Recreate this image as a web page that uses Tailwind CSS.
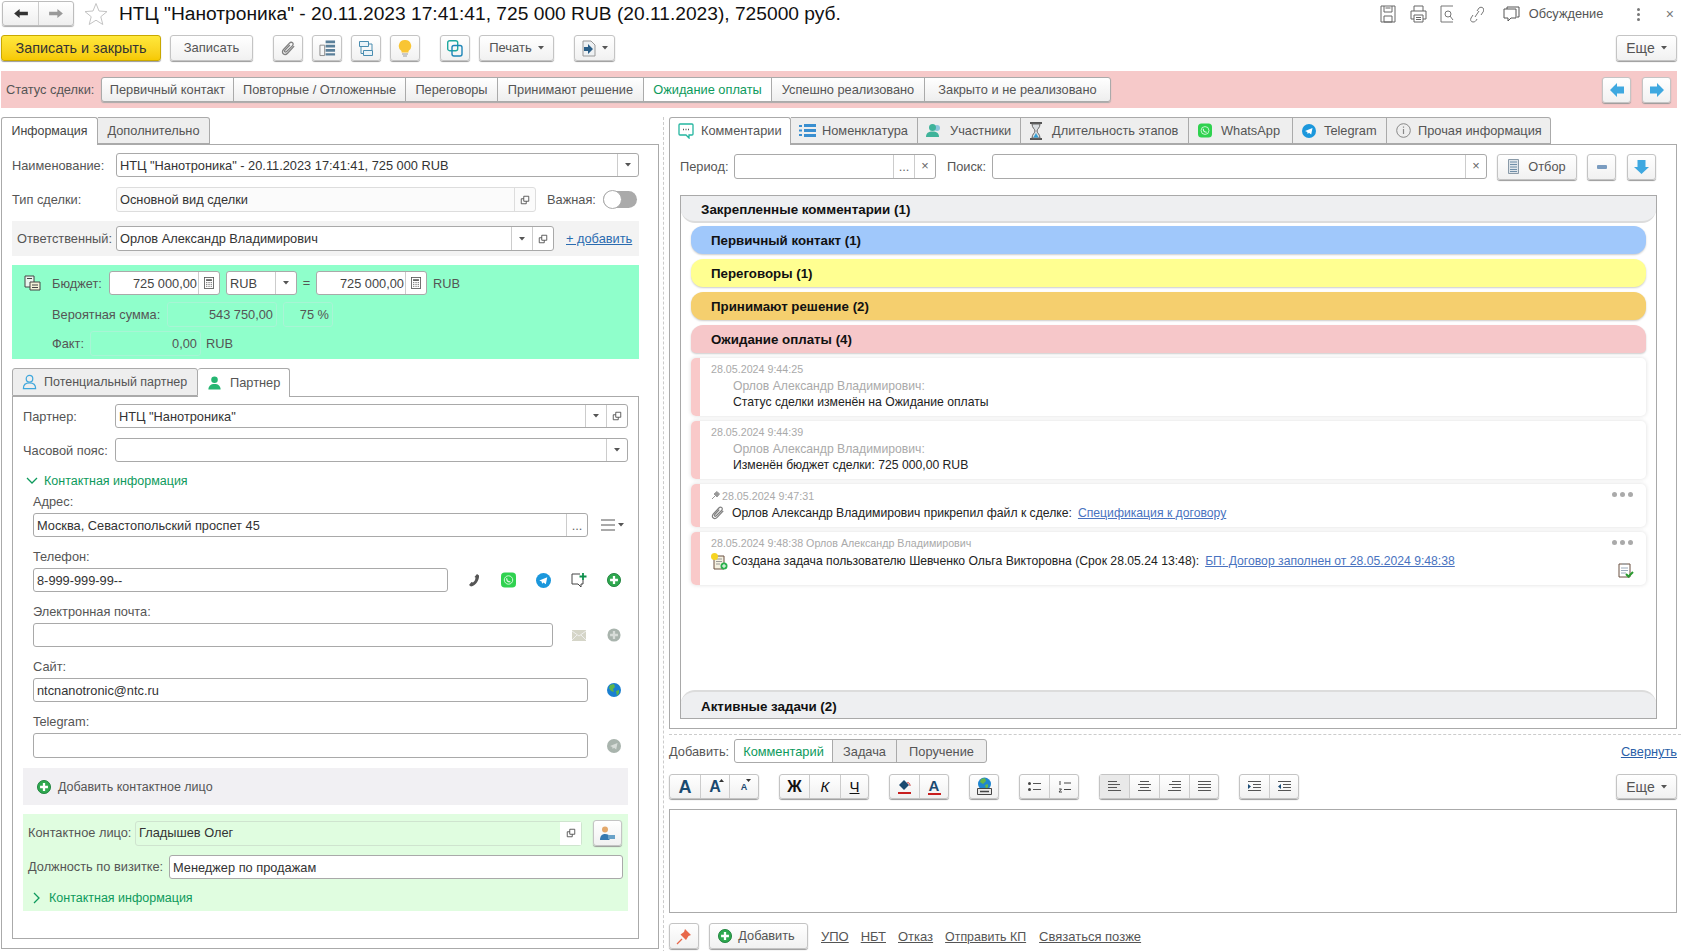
<!DOCTYPE html>
<html lang="ru">
<head>
<meta charset="UTF-8">
<title>НТЦ Нанотроника</title>
<script src="https://cdn.jsdelivr.net/npm/@tailwindcss/browser@4"></script>
</head>
<body class="w-[1681px] h-[951px] overflow-hidden bg-white text-[12.8px] leading-[14px] text-[#444] font-['Liberation_Sans',Arial,sans-serif]">

<svg class="hidden">
  <symbol id="copy" viewBox="0 0 12 12"><path d="M4.500 1.500h6v6h-6z M4.500 4.500h-3v6h6v-3" fill="none" stroke="#444" stroke-width="1"/></symbol>
  <symbol id="dd" viewBox="0 0 6 4"><path d="M0 0h6L3 3.500z" fill="#555"/></symbol>
  <symbol id="plus" viewBox="0 0 16 16"><circle cx="8" cy="8" r="7.500" fill="#2fa84f"/><circle cx="8" cy="8" r="7.500" fill="none" stroke="#1c7f3a" stroke-width="1"/><path d="M8 3.500v9M3.500 8h9" stroke="#fff" stroke-width="2.600"/></symbol>
  <symbol id="plusgray" viewBox="0 0 16 16"><circle cx="8" cy="8" r="7.500" fill="#a9b4ad"/><path d="M8 3.500v9M3.500 8h9" stroke="#d7dcd8" stroke-width="2.600"/></symbol>
  <symbol id="calc" viewBox="0 0 12 14"><rect x=".5" y=".5" width="11" height="13" fill="none" stroke="#555"/><path d="M2.500 2.500h7v2h-7z" fill="#555"/><path d="M2.500 6.500h1.500M5.300 6.500h1.500M8 6.500h1.500M2.500 8.700h1.500M5.300 8.700h1.500M8 8.700h1.500M2.500 11h1.500M5.300 11h1.500M8 11h1.500" stroke="#555"/></symbol>
  <symbol id="wa" viewBox="0 0 16 16"><rect width="16" height="16" rx="4" fill="#2fd24f"/><circle cx="8" cy="8" r="4.500" fill="none" stroke="#d8f8de" stroke-width="1"/><path d="M6 6c0 2.500 1.500 4 4 4" fill="none" stroke="#d8f8de" stroke-width="1.300"/></symbol>
  <symbol id="tg" viewBox="0 0 16 16"><circle cx="8" cy="8" r="8" fill="#1b97dc"/><path d="M3.500 8l8.500-3.500-1.500 7.500-2.500-2-1.500 1.500-.5-2.500z" fill="#fff"/></symbol>
  <symbol id="person" viewBox="0 0 16 16"><circle cx="8" cy="4.500" r="3.500"/><path d="M1.500 15c0-4 2.500-6 6.500-6s6.500 2 6.500 6z"/></symbol>
  <symbol id="hourglass" viewBox="0 0 14 18"><path d="M1 1h12M1 17h12" stroke="#555" stroke-width="2"/><path d="M3 2c0 4 3 5 3 7s-3 3-3 7h8c0-4-3-5-3-7s3-3 3-7z" fill="#d9dde0" stroke="#666"/><path d="M4.500 15.500c.5-2 2.500-3 2.500-5 0 2 2 3 2.500 5z" fill="#2f9fd8"/></symbol>
  <symbol id="clip" viewBox="0 0 16 16"><path d="M14 5.500l-7 7.500c-1.400 1.500-3.400 1.600-4.600.5s-1.100-3 .3-4.500l6.300-6.700c1-1.100 2.400-1.200 3.300-.4s.8 2.300-.2 3.300L6 11.200c-.6.600-1.400.7-1.900.3s-.4-1.200.2-1.800l5.200-5.500" fill="none" stroke="#808080" stroke-width="1.400"/></symbol>
</svg>

<!-- заголовок -->
<div class="h-[35px] flex items-start pt-[1px]">
  <div class="ml-[2px] w-[72px] h-[25px] flex border border-[#bdbdbd] rounded-[3px] bg-linear-to-b from-white to-[#efefef] shadow-[0_1px_1px_#aaa]">
    <div class="w-[36px] flex items-center justify-center border-r border-[#ccc]"><svg width="14" height="11" viewBox="0 0 15 12"><path d="M0 6l6-5v3h9v4H6v3z" fill="#333"/></svg></div>
    <div class="flex-1 flex items-center justify-center"><svg width="14" height="11" viewBox="0 0 15 12"><path d="M15 6L9 1v3H0v4h9v3z" fill="#999"/></svg></div>
  </div>
  <svg class="ml-[10px] mt-[1px]" width="24" height="24" viewBox="0 0 24 24"><path d="M12 1.500l3 7.500 8 .6-6.200 5.100 2 7.800L12 18.200 5.200 22.500l2-7.800L1 9.600 9 9z" fill="#fff" stroke="#c4c4c4"/></svg>
  <div class="ml-[11px] mt-[2px] text-[19.2px] leading-[22px] text-[#111] whitespace-nowrap">НТЦ "Нанотроника" - 20.11.2023 17:41:41, 725 000 RUB (20.11.2023), 725000 руб.</div>
  <div class="ml-auto flex items-center h-[26px] text-[#555]">
    <svg width="16" height="18" viewBox="0 0 16 18"><path d="M1 1h14v16H1z M4 1v6h8V1 M4 11h8v6H4z M5.500 3h5" fill="none" stroke="#666"/></svg>
    <svg class="ml-[14px]" width="17" height="18" viewBox="0 0 17 18"><path d="M4 6V1h9v5 M1 6h15v8h-3 M4 14H1V6 M4 10h9v7H4z M6 12.500h5M6 14.500h5" fill="none" stroke="#666"/></svg>
    <svg class="ml-[13px]" width="16" height="18" viewBox="0 0 16 18"><path d="M13 1H1v16h12" fill="none" stroke="#777"/><circle cx="8" cy="9" r="3" fill="none" stroke="#777"/><path d="M10 11l3 4" stroke="#777"/></svg>
    <svg class="ml-[13px]" width="15" height="17" viewBox="0 0 15 17"><path d="M6 11l4-6M4 9l-2 3c-1 2 0 4 2 4s3-1 4-3M8 5l2-3c1-1 3-1 4 0s1 3 0 4l-2 3" fill="none" stroke="#777"/></svg>
    <svg class="ml-[19px]" width="17" height="17" viewBox="0 0 17 17"><path d="M4 3V1h12v10h-2 M1 3h12v9H8l-3 3v-3H1z" fill="#fff" stroke="#555"/></svg>
    <span class="ml-[9px] w-[75px] whitespace-nowrap">Обсуждение</span>
    <span class="ml-[33px] w-[4px] flex flex-col gap-[2px]"><i class="block w-[3px] h-[3px] rounded-full bg-[#777]"></i><i class="block w-[3px] h-[3px] rounded-full bg-[#777]"></i><i class="block w-[3px] h-[3px] rounded-full bg-[#777]"></i></span>
    <span class="ml-[25px] mr-[7px] text-[14px] text-[#777]">×</span>
  </div>
</div>

<!-- панель команд -->
<div class="h-[36px] flex items-start">
  <button class="ml-[1px] w-[160px] h-[26px] border border-[#c9a800] rounded-[3px] bg-linear-to-b from-[#ffe83a] to-[#f6c900] shadow-[0_1px_1px_#999] text-[#333] text-[14.4px]">Записать и закрыть</button>
  <button class="ml-[9px] w-[83px] h-[26px] border border-[#c4c4c4] rounded-[3px] bg-linear-to-b from-white to-[#f1f1f1] shadow-[0_1px_1px_#999] text-[#555] text-[13px]">Записать</button>
  <button class="ml-[20px] w-[30px] h-[26px] flex items-center justify-center border border-[#c4c4c4] rounded-[3px] bg-linear-to-b from-white to-[#f1f1f1] shadow-[0_1px_1px_#999]"><svg width="15" height="15"><use href="#clip"/></svg></button>
  <button class="ml-[9px] w-[30px] h-[26px] flex items-center justify-center border border-[#c4c4c4] rounded-[3px] bg-linear-to-b from-white to-[#f1f1f1] shadow-[0_1px_1px_#999]"><svg width="17" height="18" viewBox="0 0 18 18"><path d="M1 6h5v11H1z" fill="none" stroke="#888"/><path d="M7 1h10v3H7zM7 5.500h10v3H7zM7 10h10v3H7zM7 14.500h10v2.500H7z" fill="#5a7f99"/></svg></button>
  <button class="ml-[9px] w-[30px] h-[26px] flex items-center justify-center border border-[#c4c4c4] rounded-[3px] bg-linear-to-b from-white to-[#f1f1f1] shadow-[0_1px_1px_#999]"><svg width="16" height="17" viewBox="0 0 16 17"><path d="M1.500 1.500h9v5h-9zM5.500 10.500h9v5h-9z" fill="#eaf3f8" stroke="#4a8db0"/><path d="M3 7v6.500h2.500M10.500 4H14v6" fill="none" stroke="#4a8db0"/></svg></button>
  <button class="ml-[9px] w-[30px] h-[26px] flex items-center justify-center border border-[#c4c4c4] rounded-[3px] bg-linear-to-b from-white to-[#f1f1f1] shadow-[0_1px_1px_#999]"><svg width="14" height="19" viewBox="0 0 14 19"><path d="M7 1a6 6 0 0 1 3.500 11v1.500h-7V12A6 6 0 0 1 7 1z" fill="#f9c533"/><path d="M4 15h6M5 17h4" stroke="#bbb" stroke-width="1.500"/></svg></button>
  <button class="ml-[20px] w-[30px] h-[26px] flex items-center justify-center border border-[#c4c4c4] rounded-[3px] bg-linear-to-b from-white to-[#f1f1f1] shadow-[0_1px_1px_#999]"><svg width="16" height="17" viewBox="0 0 16 17"><rect x=".7" y=".7" width="10" height="10" rx="2" fill="none" stroke="#1fa9a0" stroke-width="1.400"/><rect x="5" y="5.500" width="10" height="10.500" rx="2" fill="none" stroke="#1f86b8" stroke-width="1.400"/></svg></button>
  <button class="ml-[9px] w-[75px] h-[26px] flex items-center justify-center gap-[6px] border border-[#c4c4c4] rounded-[3px] bg-linear-to-b from-white to-[#f1f1f1] shadow-[0_1px_1px_#999] text-[#555] text-[13px]">Печать<svg width="6" height="4"><use href="#dd"/></svg></button>
  <button class="ml-[20px] w-[41px] h-[26px] flex items-center justify-center gap-[6px] border border-[#c4c4c4] rounded-[3px] bg-linear-to-b from-white to-[#f1f1f1] shadow-[0_1px_1px_#999]"><svg width="14" height="17" viewBox="0 0 14 17"><path d="M1 1h8l4 4v11H1z" fill="#eef1f3" stroke="#999"/><path d="M2 7h4V4l5 5-5 5v-3H2z" fill="#2b5f88"/></svg><svg width="6" height="4"><use href="#dd"/></svg></button>
  <button class="ml-auto mr-[4px] w-[61px] h-[26px] flex items-center justify-center gap-[6px] border border-[#c4c4c4] rounded-[3px] bg-linear-to-b from-white to-[#f1f1f1] shadow-[0_1px_1px_#999] text-[#555] text-[14px]">Еще<svg width="6" height="4"><use href="#dd"/></svg></button>
</div>

<!-- статус сделки -->
<div class="ml-[1px] w-[1676px] h-[37px] bg-[#f6c9c9] flex items-center">
  <span class="ml-[5px] w-[95px] text-[#555] whitespace-nowrap">Статус сделки:</span>
  <div class="flex h-[25px] border border-[#aaa] rounded-[3px] bg-linear-to-b from-white to-[#eeeeee] shadow-[0_1px_1px_#aaa] text-[#555]">
    <span class="w-[132px] flex items-center justify-center border-r border-[#aaa]">Первичный контакт</span>
    <span class="w-[172px] flex items-center justify-center border-r border-[#aaa]">Повторные / Отложенные</span>
    <span class="w-[92px] flex items-center justify-center border-r border-[#aaa]">Переговоры</span>
    <span class="w-[146px] flex items-center justify-center border-r border-[#aaa]">Принимают решение</span>
    <span class="w-[128px] flex items-center justify-center border-r border-[#aaa] bg-white text-[#0d9a5c]">Ожидание оплаты</span>
    <span class="w-[153px] flex items-center justify-center border-r border-[#aaa]">Успешно реализовано</span>
    <span class="w-[185px] flex items-center justify-center">Закрыто и не реализовано</span>
  </div>
  <button class="ml-auto w-[29px] h-[26px] flex items-center justify-center border border-[#c4c4c4] rounded-[3px] bg-linear-to-b from-white to-[#f1f1f1] shadow-[0_1px_1px_#999]"><svg width="14" height="16" viewBox="0 0 14 16"><path d="M0 8l7-7v3.500h7v7H7V15z" fill="#3ea8e0"/></svg></button>
  <button class="ml-[11px] mr-[6px] w-[29px] h-[26px] flex items-center justify-center border border-[#c4c4c4] rounded-[3px] bg-linear-to-b from-white to-[#f1f1f1] shadow-[0_1px_1px_#999]"><svg width="14" height="16" viewBox="0 0 14 16"><path d="M14 8L7 1v3.500H0v7h7V15z" fill="#3ea8e0"/></svg></button>
</div>

<div class="flex mt-[9px]">
  <!-- левая колонка -->
  <div class="ml-[1px] w-[658px] shrink-0">
    <div class="flex h-[27px]">
      <div class="w-[97px] h-[28px] pb-[1px] flex items-center justify-center border border-b-0 border-[#aaa] rounded-t-[3px] bg-white text-[#444] text-[12.4px] relative z-10">Информация</div>
      <div class="w-[112px] flex items-center justify-center border border-l-0 border-[#aaa] rounded-tr-[3px] bg-[#eeeeee] text-[#555]">Дополнительно</div>
    </div>
    <div class="h-[805px] border border-[#aaa] pl-[10px]">
      <div class="mt-[8px] h-[24px] flex items-center">
        <span class="w-[104px] mt-[2px] text-[#555]">Наименование:</span>
        <div class="w-[523px] h-[24px] flex border border-[#a9a9a9] rounded-[3px] bg-white text-[#333]"><span class="flex-1 pl-[3px] self-center mt-[2px] whitespace-nowrap">НТЦ "Нанотроника" - 20.11.2023 17:41:41, 725 000 RUB</span><span class="w-[21px] flex items-center justify-center border-l border-[#ccc]"><svg width="6" height="4"><use href="#dd"/></svg></span></div>
      </div>
      <div class="mt-[10px] h-[25px] flex items-center">
        <span class="w-[104px] text-[#555]">Тип сделки:</span>
        <div class="w-[420px] h-[25px] flex border border-[#ddd] rounded-[3px] bg-[#fbfbfb] text-[#333]"><span class="flex-1 pl-[3px] self-center">Основной вид сделки</span><span class="w-[21px] flex items-center justify-center border-l border-[#ddd]"><svg width="10" height="10"><use href="#copy"/></svg></span></div>
        <span class="ml-[11px] w-[56px] text-[#555]">Важная:</span>
        <span class="w-[34px] h-[17px] rounded-full bg-[#aaa] relative"><i class="absolute left-0 -top-[1px] w-[19px] h-[19px] rounded-full bg-white border border-[#aaa]"></i></span>
      </div>
      <div class="mt-[9px] w-[627px] h-[35px] bg-[#f3f3f3] flex items-start pt-[5px]">
        <span class="w-[104px] pl-[5px] h-[25px] leading-[25px] text-[#555] whitespace-nowrap">Ответственный:</span>
        <div class="w-[438px] h-[25px] flex border border-[#a9a9a9] rounded-[3px] bg-white text-[#333]"><span class="flex-1 pl-[3px] self-center">Орлов Александр Владимирович</span><span class="w-[21px] flex items-center justify-center border-l border-[#ccc]"><svg width="6" height="4"><use href="#dd"/></svg></span><span class="w-[21px] flex items-center justify-center border-l border-[#ccc]"><svg width="10" height="10"><use href="#copy"/></svg></span></div>
        <a class="ml-[12px] h-[25px] leading-[25px] text-[#2b6cb0] underline whitespace-nowrap">+ добавить</a>
      </div>

      <div class="mt-[9px] w-[627px] h-[94px] bg-[#8fffcb] pt-[6px] text-[#555]">
        <div class="h-[24px] flex items-center">
          <svg class="ml-[12px]" width="17" height="16" viewBox="0 0 17 16"><path d="M1 1h9v11H1z" fill="#e9f5ee" stroke="#444"/><path d="M6 7h10v8H6z" fill="#f2f2d8" stroke="#444"/><path d="M8 10h6M8 12.500h6M3 3.500h5" stroke="#444"/></svg>
          <span class="ml-[11px] w-[57px] mt-[1px]">Бюджет:</span>
          <div class="w-[111px] h-[24px] flex border border-[#a9a9a9] rounded-[3px] bg-white text-[#444]"><span class="flex-1 pr-[1px] self-center mt-[1px] text-right whitespace-nowrap">725 000,00</span><span class="w-[21px] flex items-center justify-center border-l border-[#ccc]"><svg width="10" height="12"><use href="#calc"/></svg></span></div>
          <div class="ml-[6px] w-[71px] h-[24px] flex border border-[#a9a9a9] rounded-[3px] bg-white text-[#444]"><span class="flex-1 pl-[3px] self-center mt-[1px]">RUB</span><span class="w-[21px] flex items-center justify-center border-l border-[#ccc]"><svg width="6" height="4"><use href="#dd"/></svg></span></div>
          <span class="w-[19px] text-center">=</span>
          <div class="w-[111px] h-[24px] flex border border-[#a9a9a9] rounded-[3px] bg-white text-[#444]"><span class="flex-1 pr-[1px] self-center mt-[1px] text-right whitespace-nowrap">725 000,00</span><span class="w-[21px] flex items-center justify-center border-l border-[#ccc]"><svg width="10" height="12"><use href="#calc"/></svg></span></div>
          <span class="ml-[6px] mt-[1px]">RUB</span>
        </div>
        <div class="mt-[7px] h-[25px] flex items-center pl-[40px]">
          <span class="w-[115px] whitespace-nowrap">Вероятная сумма:</span>
          <span class="w-[110px] h-[25px] leading-[23px] border border-[#a8f5d5] rounded-[3px] text-right pr-[3px]">543 750,00</span>
          <span class="ml-[6px] w-[50px] h-[25px] leading-[23px] border border-[#a8f5d5] rounded-[3px] text-right pr-[3px]">75 %</span>
        </div>
        <div class="mt-[4px] h-[25px] flex items-center pl-[40px]">
          <span class="w-[38px]">Факт:</span>
          <span class="w-[111px] h-[25px] leading-[23px] border border-[#a8f5d5] rounded-[3px] text-right pr-[3px]">0,00</span>
          <span class="ml-[5px]">RUB</span>
        </div>
      </div>

      <div class="mt-[9px] h-[28px] flex">
        <div class="w-[186px] flex items-center border border-[#aaa] rounded-t-[3px] bg-[#eeeeee] text-[#555]"><svg class="ml-[9px]" width="15" height="16" viewBox="0 0 16 16"><circle cx="8" cy="4.500" r="3.500" fill="none" stroke="#3fa7dc" stroke-width="1.300"/><path d="M1.500 15c0-4 2.500-6 6.500-6s6.500 2 6.500 6z" fill="none" stroke="#3fa7dc" stroke-width="1.300"/></svg><span class="ml-[7px] text-[12.5px] whitespace-nowrap">Потенциальный партнер</span></div>
        <div class="w-[92px] h-[29px] pb-[1px] flex items-center border border-l-0 border-b-0 border-[#aaa] rounded-t-[3px] bg-white relative z-10 text-[#555]"><svg class="ml-[9px] fill-[#25b672]" width="15" height="16"><use href="#person"/></svg><span class="ml-[8px]">Партнер</span></div>
      </div>
      <div class="w-[627px] h-[543px] border border-[#aaa] pl-[10px]">
        <div class="mt-[7px] h-[24px] flex items-center">
          <span class="w-[92px] mt-[1px] text-[#555]">Партнер:</span>
          <div class="w-[513px] h-[24px] flex border border-[#a9a9a9] rounded-[3px] bg-white text-[#333]"><span class="flex-1 pl-[3px] self-center mt-[1px]">НТЦ "Нанотроника"</span><span class="w-[21px] flex items-center justify-center border-l border-[#ccc]"><svg width="6" height="4"><use href="#dd"/></svg></span><span class="w-[21px] flex items-center justify-center border-l border-[#ccc]"><svg width="10" height="10"><use href="#copy"/></svg></span></div>
        </div>
        <div class="mt-[10px] h-[24px] flex items-center">
          <span class="w-[92px] mt-[1px] text-[#555] whitespace-nowrap">Часовой пояс:</span>
          <div class="w-[513px] h-[24px] flex justify-end border border-[#a9a9a9] rounded-[3px] bg-white"><span class="w-[21px] flex items-center justify-center border-l border-[#ccc]"><svg width="6" height="4"><use href="#dd"/></svg></span></div>
        </div>
        <div class="mt-[11px] h-[16px] flex items-center text-[#0d9a5c] text-[12.5px]"><svg class="ml-[3px]" width="12" height="8" viewBox="0 0 12 8"><path d="M1 1l5 5 5-5" fill="none" stroke="#0d9a5c" stroke-width="1.300"/></svg><span class="ml-[6px]">Контактная информация</span></div>

        <div class="mt-[6px] ml-[10px] h-[14px] text-[#555]">Адрес:</div>
        <div class="mt-[4px] ml-[10px] h-[24px] flex items-center">
          <div class="w-[555px] h-[24px] flex border border-[#a9a9a9] rounded-[3px] bg-white text-[#333]"><span class="flex-1 pl-[3px] self-center mt-[2px]">Москва, Севастопольский проспет 45</span><span class="w-[21px] text-center border-l border-[#ccc] text-[#666] leading-[24px]">...</span></div>
          <svg class="ml-[13px]" width="14" height="12" viewBox="0 0 14 12"><path d="M0 1h14M0 6h14M0 11h14" stroke="#555"/></svg>
          <svg class="ml-[3px]" width="6" height="4"><use href="#dd"/></svg>
        </div>

        <div class="mt-[13px] ml-[10px] h-[14px] text-[#555]">Телефон:</div>
        <div class="mt-[4px] ml-[10px] h-[24px] flex items-center">
          <div class="w-[415px] h-[24px] border border-[#a9a9a9] rounded-[3px] bg-white text-[#333] pl-[3px] leading-[24px]">8-999-999-99--</div>
          <span class="ml-[8px] w-[35px] flex justify-center"><svg width="13" height="14" viewBox="0 0 13 14"><path d="M10 1l2 1.500c.5 4-3 10-8 11L2 12l2.500-3L6 9.500c1.500-1 2.500-3 2.500-5L7.500 4z" fill="#555"/></svg></span>
          <span class="w-[35px] flex justify-center"><svg width="15" height="16"><use href="#wa"/></svg></span>
          <span class="w-[35px] flex justify-center"><svg width="15" height="15"><use href="#tg"/></svg></span>
          <span class="w-[35px] flex justify-center"><svg width="16" height="16" viewBox="0 0 16 16"><path d="M9 2H1v10h6l3 3v-3h2V8" fill="none" stroke="#444"/><path d="M12 1v7M8.500 4.500h7" stroke="#0d8f4c" stroke-width="1.800"/></svg></span>
          <span class="w-[35px] flex justify-center"><svg width="14" height="14"><use href="#plus"/></svg></span>
        </div>

        <div class="mt-[13px] ml-[10px] h-[14px] text-[#555]">Электронная почта:</div>
        <div class="mt-[4px] ml-[10px] h-[24px] flex items-center">
          <div class="w-[520px] h-[24px] border border-[#a9a9a9] rounded-[3px] bg-white"></div>
          <span class="ml-[8px] w-[35px] flex justify-center"><svg width="14" height="11" viewBox="0 0 14 11"><rect width="14" height="11" fill="#d5d5c8"/><path d="M0 1l7 5 7-5M0 10l5-5M14 10L9 5" fill="none" stroke="#eee"/></svg></span>
          <span class="w-[35px] flex justify-center"><svg width="14" height="14"><use href="#plusgray"/></svg></span>
        </div>

        <div class="mt-[13px] ml-[10px] h-[14px] text-[#555]">Сайт:</div>
        <div class="mt-[4px] ml-[10px] h-[24px] flex items-center">
          <div class="w-[555px] h-[24px] border border-[#a9a9a9] rounded-[3px] bg-white text-[#333] pl-[3px] leading-[24px]">ntcnanotronic@ntc.ru</div>
          <span class="ml-[8px] w-[35px] flex justify-center"><svg width="14" height="14" viewBox="0 0 14 14"><circle cx="7" cy="7" r="7" fill="#1a7fd0"/><path d="M3 2l4-1 1 3-2 2 1 3-3-1-2-3zM9 8l3-1 0 3-2 3z" fill="#5db54a"/></svg></span>
        </div>

        <div class="mt-[13px] ml-[10px] h-[14px] text-[#555]">Telegram:</div>
        <div class="mt-[4px] ml-[10px] h-[25px] flex items-center">
          <div class="w-[555px] h-[25px] border border-[#a9a9a9] rounded-[3px] bg-white"></div>
          <span class="ml-[8px] w-[35px] flex justify-center"><svg width="14" height="14" viewBox="0 0 16 16"><circle cx="8" cy="8" r="8" fill="#a9b4ad"/><path d="M3.500 8l8.500-3.500-1.500 7.500-2.500-2-1.500 1.500-.5-2.500z" fill="#d7dcd8"/></svg></span>
        </div>

        <div class="mt-[10px] w-[605px] h-[37px] bg-[#f1f0f3] flex items-center text-[#555] text-[12.5px]"><svg class="ml-[14px]" width="14" height="14"><use href="#plus"/></svg><span class="ml-[7px]">Добавить контактное лицо</span></div>

        <div class="mt-[9px] w-[605px] h-[97px] bg-[#e0fde0] text-[#555] pt-[6px]">
          <div class="h-[26px] flex items-center pl-[5px]">
            <span class="w-[107px] whitespace-nowrap">Контактное лицо:</span>
            <div class="w-[447px] h-[25px] flex border border-[#cfe4cf] rounded-[3px] text-[#333]"><span class="flex-1 pl-[3px] self-center">Гладышев Олег</span><span class="w-[21px] flex items-center justify-center bg-white"><svg width="10" height="10"><use href="#copy"/></svg></span></div>
            <button class="ml-[11px] w-[29px] h-[26px] flex items-center justify-center border border-[#c4c4c4] rounded-[3px] bg-linear-to-b from-white to-[#f1f1f1] shadow-[0_1px_1px_#999]"><svg width="15" height="15" viewBox="0 0 15 15"><circle cx="5" cy="3.500" r="3" fill="#e3a86b"/><path d="M0 14c0-4 2-6 5-6s4 1 4.500 2v4z" fill="#3578b0"/><path d="M8 9h7v4H8z" fill="#6aa2c8"/></svg></button>
          </div>
          <div class="mt-[9px] h-[24px] flex items-center pl-[5px]">
            <span class="w-[141px] whitespace-nowrap">Должность по визитке:</span>
            <div class="w-[454px] h-[24px] border border-[#a9a9a9] rounded-[3px] bg-white text-[#333] pl-[3px] leading-[24px]">Менеджер по продажам</div>
          </div>
          <div class="mt-[11px] h-[16px] flex items-center text-[#0d9a5c] text-[12.5px]"><svg class="ml-[10px]" width="8" height="12" viewBox="0 0 8 12"><path d="M1 1l5 5-5 5" fill="none" stroke="#0d9a5c" stroke-width="1.300"/></svg><span class="ml-[8px]">Контактная информация</span></div>
        </div>
      </div>
    </div>
  </div>

  <div class="ml-[4px] w-0 h-[841px] border-l border-dashed border-[#ccc]"></div>

  <!-- правая колонка -->
  <div class="ml-[5px] w-[1012px]">
    <div class="flex h-[27px] text-[#555]">
      <div class="w-[122px] h-[28px] pb-[1px] flex items-center border border-b-0 border-[#aaa] rounded-t-[3px] bg-white relative z-10"><svg class="ml-[8px]" width="16" height="16" viewBox="0 0 16 16"><path d="M2 1h12a1 1 0 0 1 1 1v9a1 1 0 0 1-1 1h-3v3l-3-3H2a1 1 0 0 1-1-1V2a1 1 0 0 1 1-1z" fill="none" stroke="#25b6a0" stroke-width="1.300"/><path d="M5 6.500h1M7.500 6.500h1M10 6.500h1" stroke="#555" stroke-width="1.300"/></svg><span class="ml-[7px]">Комментарии</span></div>
      <div class="w-[127px] flex items-center border border-l-0 border-[#aaa] bg-[#eeeeee]"><svg class="ml-[8px]" width="17" height="13" viewBox="0 0 17 13"><path d="M0 1h3v2H0zM0 5.500h3v2H0zM0 10h3v2H0zM5 0h12v3H5zM5 5h12v3H5zM5 10h12v3H5z" fill="#3a8fd0"/></svg><span class="ml-[6px]">Номенклатура</span></div>
      <div class="w-[103px] flex items-center border border-l-0 border-[#aaa] bg-[#eeeeee]"><svg class="ml-[8px]" width="16" height="16" viewBox="0 0 16 16"><circle cx="11" cy="5" r="3" fill="#8cc5dd"/><circle cx="6.500" cy="4.500" r="3.500" fill="#3fb39a"/><path d="M0 14c0-4 2.500-5.500 6.500-5.500S13 10 13 14z" fill="#3fb39a"/></svg><span class="ml-[8px]">Участники</span></div>
      <div class="w-[168px] flex items-center border border-l-0 border-[#aaa] bg-[#eeeeee]"><svg class="ml-[8px]" width="14" height="18"><use href="#hourglass"/></svg><span class="ml-[9px] whitespace-nowrap">Длительность этапов</span></div>
      <div class="w-[104px] flex items-center border border-l-0 border-[#aaa] bg-[#eeeeee]"><svg class="ml-[9px]" width="14" height="15"><use href="#wa"/></svg><span class="ml-[9px]">WhatsApp</span></div>
      <div class="w-[94px] flex items-center border border-l-0 border-[#aaa] bg-[#eeeeee]"><svg class="ml-[9px]" width="14" height="14"><use href="#tg"/></svg><span class="ml-[8px]">Telegram</span></div>
      <div class="w-[164px] flex items-center border border-l-0 border-[#aaa] rounded-tr-[3px] bg-[#eeeeee]"><svg class="ml-[9px]" width="15" height="15" viewBox="0 0 15 15"><circle cx="7.500" cy="7.500" r="6.800" fill="none" stroke="#888"/><path d="M7.500 6v5M7.500 3.500v1.200" stroke="#888" stroke-width="1.200"/></svg><span class="ml-[7px] whitespace-nowrap">Прочая информация</span></div>
    </div>
    <div class="w-[1008px] h-[585px] border border-[#aaa] pl-[10px]">
      <div class="mt-[9px] h-[25px] flex items-center">
        <span class="w-[54px] text-[#555]">Период:</span>
        <div class="w-[202px] h-[25px] flex justify-end border border-[#a9a9a9] rounded-[3px] bg-white text-[#666]"><span class="w-[21px] text-center border-l border-[#ccc] leading-[24px]">...</span><span class="w-[21px] text-center border-l border-[#ccc] leading-[22px]">×</span></div>
        <span class="ml-[11px] w-[45px] text-[#555]">Поиск:</span>
        <div class="w-[495px] h-[25px] flex justify-end border border-[#a9a9a9] rounded-[3px] bg-white text-[#666]"><span class="w-[21px] text-center border-l border-[#ccc] leading-[22px]">×</span></div>
        <button class="ml-[10px] w-[80px] h-[26px] flex items-center justify-center gap-[9px] border border-[#c4c4c4] rounded-[3px] bg-linear-to-b from-white to-[#f1f1f1] shadow-[0_1px_1px_#999] text-[#555]"><svg width="11" height="15" viewBox="0 0 11 15"><path d="M.5.500h10v14H.500z" fill="#dfe5ea" stroke="#8a9aa8"/><path d="M2 3h7M2 5.500h7M2 8h7M2 10.500h7M2 12.500h7" stroke="#6f8ea8"/></svg>Отбор</button>
        <button class="ml-[10px] w-[29px] h-[26px] flex items-center justify-center border border-[#c4c4c4] rounded-[3px] bg-linear-to-b from-white to-[#f1f1f1] shadow-[0_1px_1px_#999]"><svg width="10" height="4"><rect width="10" height="4" rx="1" fill="#7a9cc0"/></svg></button>
        <button class="ml-[11px] w-[29px] h-[26px] flex items-center justify-center border border-[#c4c4c4] rounded-[3px] bg-linear-to-b from-white to-[#f1f1f1] shadow-[0_1px_1px_#999]"><svg width="15" height="14" viewBox="0 0 15 14"><path d="M7.500 14L0 7h3.500V0h8v7H15z" fill="#3ea8e0"/></svg></button>
      </div>

      <div class="mt-[16px] w-[977px] h-[524px] border border-[#a9a9a9] flex flex-col">
        <div class="h-[27px] shrink-0 bg-[#eeeff1] border-b-2 border-[#dcdcdc] rounded-b-[14px] pl-[20px] text-[13.4px] font-bold text-[#111] leading-[28px]">Закрепленные комментарии (1)</div>
        <div class="ml-[10px] w-[955px]">
          <div class="mt-[3px] h-[28px] rounded-[12px] bg-[#a0c8fb] shadow-[0_1px_2px_#ccc] pl-[20px] text-[13.3px] font-bold text-[#111] leading-[30px]">Первичный контакт (1)</div>
          <div class="mt-[5px] h-[28px] rounded-[12px] bg-[#ffff91] shadow-[0_1px_2px_#ccc] pl-[20px] text-[13.3px] font-bold text-[#111] leading-[30px]">Переговоры (1)</div>
          <div class="mt-[5px] h-[28px] rounded-[12px] bg-[#f5cf6e] shadow-[0_1px_2px_#ccc] pl-[20px] text-[13.3px] font-bold text-[#111] leading-[30px]">Принимают решение (2)</div>
          <div class="mt-[5px] h-[28px] rounded-t-[12px] rounded-b-[5px] bg-[#f6c7c9] shadow-[0_1px_2px_#ccc] pl-[20px] text-[13.3px] font-bold text-[#111] leading-[30px]">Ожидание оплаты (4)</div>

          <div class="mt-[5px] h-[58px] rounded-[5px] border-l-[9px] border-[#f9c9c9] shadow-[0_0_4px_#ddd] pl-[11px] pt-[5px] text-[12.2px]">
            <div class="h-[13px] text-[10.7px] leading-[13px] text-[#aaa]">28.05.2024 9:44:25</div>
            <div class="mt-[3px] ml-[22px] text-[#aaa] h-[14px]">Орлов Александр Владимирович:</div>
            <div class="mt-[2px] ml-[22px] text-[#222]">Статус сделки изменён на Ожидание оплаты</div>
          </div>
          <div class="mt-[5px] h-[58px] rounded-[5px] border-l-[9px] border-[#f9c9c9] shadow-[0_0_4px_#ddd] pl-[11px] pt-[5px] text-[12.2px]">
            <div class="h-[13px] text-[10.7px] leading-[13px] text-[#aaa]">28.05.2024 9:44:39</div>
            <div class="mt-[3px] ml-[22px] text-[#aaa] h-[14px]">Орлов Александр Владимирович:</div>
            <div class="mt-[2px] ml-[22px] text-[#222]">Изменён бюджет сделки: 725 000,00 RUB</div>
          </div>
          <div class="mt-[5px] h-[43px] rounded-[5px] border-l-[9px] border-[#f9c9c9] shadow-[0_0_4px_#ddd] pl-[11px] pt-[5px] relative text-[12.2px]">
            <div class="h-[13px] flex items-center text-[10.7px] text-[#aaa]"><svg width="9" height="9" viewBox="0 0 9 9"><path d="M1 8l3-3M3 3l3-2.500 2.500 2.500L6 6z" fill="#999" stroke="#999"/></svg><span class="ml-[2px]">28.05.2024 9:47:31</span></div>
            <div class="mt-[4px] h-[14px] flex items-center text-[#222]"><svg width="14" height="14"><use href="#clip"/></svg><span class="ml-[7px]">Орлов Александр Владимирович прикрепил файл к сделке:</span><a class="ml-[6px] text-[#4a73c0] underline">Спецификация к договору</a></div>
            <div class="absolute right-[13px] top-[8px] flex gap-[3px]"><i class="block w-[5px] h-[5px] rounded-full bg-[#aaa]"></i><i class="block w-[5px] h-[5px] rounded-full bg-[#aaa]"></i><i class="block w-[5px] h-[5px] rounded-full bg-[#aaa]"></i></div>
          </div>
          <div class="mt-[5px] h-[53px] rounded-[5px] border-l-[9px] border-[#f9c9c9] shadow-[0_0_4px_#ddd] pl-[11px] pt-[5px] relative text-[12.2px]">
            <div class="h-[13px] text-[10.7px] leading-[13px] text-[#aaa]">28.05.2024 9:48:38 Орлов Александр Владимирович</div>
            <div class="mt-[4px] h-[14px] flex items-center text-[#222]"><svg width="17" height="17" viewBox="0 0 17 17"><path d="M3 3h10v13H3z" fill="#f4f0e0" stroke="#6b5040"/><path d="M5 6h6M5 8.500h6M5 11h4" stroke="#9a9a9a"/><circle cx="3.500" cy="3.500" r="3.500" fill="#f6d422"/><circle cx="13" cy="13" r="3.500" fill="#2bb24c"/><path d="M13 11v4M11 13h4" stroke="#fff"/></svg><span class="ml-[4px] whitespace-nowrap">Создана задача пользователю Шевченко Ольга Викторовна (Срок 28.05.24 13:48):</span><a class="ml-[6px] text-[#4a73c0] underline whitespace-nowrap">БП: Договор заполнен от 28.05.2024 9:48:38</a></div>
            <div class="absolute right-[13px] top-[8px] flex gap-[3px]"><i class="block w-[5px] h-[5px] rounded-full bg-[#aaa]"></i><i class="block w-[5px] h-[5px] rounded-full bg-[#aaa]"></i><i class="block w-[5px] h-[5px] rounded-full bg-[#aaa]"></i></div>
            <svg class="absolute right-[12px] top-[30px]" width="16" height="16" viewBox="0 0 16 16"><path d="M1 2h11v13H1z" fill="#fff" stroke="#6b5040"/><path d="M4 1h5v2H4z" fill="#aaa"/><path d="M3 6h7M3 8.500h7M3 11h5" stroke="#9ab"/><path d="M8 12l2.500 2.500L15 10" fill="none" stroke="#2a9a2f" stroke-width="2"/></svg>
          </div>
        </div>
        <div class="mt-auto h-[28px] shrink-0 bg-[#eeeff1] border-t-2 border-[#dcdcdc] rounded-t-[14px] pl-[20px] text-[13.4px] font-bold text-[#111] leading-[30px]">Активные задачи (2)</div>
      </div>
    </div>

    <div class="mt-[5px] w-[1012px] border-t border-dashed border-[#ccc]"></div>

    <div class="mt-[4px] h-[24px] flex items-center w-[1008px]">
      <span class="w-[65px] mt-[2px] text-[#555]">Добавить:</span>
      <div class="flex h-[24px] border border-[#aaa] rounded-[3px] bg-[#eeeeee] text-[#555] leading-[24px]">
        <span class="w-[98px] text-center bg-white rounded-l-[3px] border-r border-[#aaa] text-[#0d9a5c]">Комментарий</span>
        <span class="w-[64px] text-center border-r border-[#aaa]">Задача</span>
        <span class="w-[89px] text-center">Поручение</span>
      </div>
      <a class="ml-auto mt-[2px] text-[#2b5fa8] underline">Свернуть</a>
    </div>

    <div class="mt-[11px] h-[25px] w-[1008px] flex items-start">
      <div class="flex h-[25px] w-[90px] border border-[#c4c4c4] rounded-[3px] bg-linear-to-b from-white to-[#f1f1f1] shadow-[0_1px_1px_#999] font-bold text-[#1b4a70]">
        <span class="w-[31px] flex items-center justify-center border-r border-[#ccc] text-[18px]">A</span>
        <span class="w-[29px] flex items-center justify-center border-r border-[#ccc] text-[16px] relative">A<svg class="absolute right-[5px] top-[4px]" width="5" height="3"><path d="M0 3h5L2.500 0z" fill="#333"/></svg></span>
        <span class="flex-1 flex items-center justify-center text-[9px] relative">A<svg class="absolute right-[7px] top-[4px]" width="5" height="3"><path d="M0 0h5L2.500 3z" fill="#333"/></svg></span>
      </div>
      <div class="ml-[20px] flex h-[25px] w-[90px] border border-[#c4c4c4] rounded-[3px] bg-linear-to-b from-white to-[#f1f1f1] shadow-[0_1px_1px_#999] text-[#111] text-[15px]">
        <span class="w-[30px] flex items-center justify-center border-r border-[#ccc] font-bold text-[16px]">Ж</span>
        <span class="w-[31px] flex items-center justify-center border-r border-[#ccc] italic">К</span>
        <span class="flex-1 flex items-center justify-center underline">Ч</span>
      </div>
      <div class="ml-[20px] flex h-[25px] w-[60px] border border-[#c4c4c4] rounded-[3px] bg-linear-to-b from-white to-[#f1f1f1] shadow-[0_1px_1px_#999]">
        <span class="w-[30px] flex items-center justify-center border-r border-[#ccc]"><svg width="15" height="16" viewBox="0 0 15 16"><path d="M7 1l5 5-5 5-5-5z" fill="#1b4a70"/><path d="M10 4c2-1 3 1 3 3" fill="none" stroke="#c81e1e"/><path d="M1 14h13" stroke="#c81e1e" stroke-width="2"/></svg></span>
        <span class="flex-1 flex flex-col items-center justify-center font-bold text-[#1b4a70] text-[15px] leading-[14px]">A<i class="block w-[13px] h-[2px] bg-[#c81e1e]"></i></span>
      </div>
      <div class="ml-[20px] flex items-center justify-center h-[25px] w-[30px] border border-[#c4c4c4] rounded-[3px] bg-linear-to-b from-white to-[#f1f1f1] shadow-[0_1px_1px_#999]"><svg width="17" height="19" viewBox="0 0 17 19"><circle cx="8.500" cy="7" r="6.500" fill="#1f86d0"/><path d="M5 2l4-1 1 3-3 3-3-2zM9 8l3-1v3l-2 2z" fill="#65b54a"/><path d="M1.500 11.500h14v6h-14z" fill="#e9e9e9" stroke="#444"/><path d="M4 14.500h9" stroke="#444" stroke-width="1.500"/></svg></div>
      <div class="ml-[20px] flex h-[25px] w-[60px] border border-[#c4c4c4] rounded-[3px] bg-linear-to-b from-white to-[#f1f1f1] shadow-[0_1px_1px_#999]">
        <span class="w-[30px] flex items-center justify-center border-r border-[#ccc]"><svg width="13" height="11" viewBox="0 0 13 11"><circle cx="1.500" cy="2.500" r="1.500" fill="#444"/><circle cx="1.500" cy="8.500" r="1.500" fill="#444"/><path d="M5 2.500h8M5 8.500h8" stroke="#555"/></svg></span>
        <span class="flex-1 flex items-center justify-center"><svg width="13" height="13" viewBox="0 0 13 13"><path d="M2 1v4M1 9h2.500L1 12h3M6 3h7M6 9.500h7" fill="none" stroke="#444"/></svg></span>
      </div>
      <div class="ml-[20px] flex h-[25px] w-[120px] border border-[#c4c4c4] rounded-[3px] bg-linear-to-b from-white to-[#f1f1f1] shadow-[0_1px_1px_#999]">
        <span class="w-[30px] flex items-center justify-center border-r border-[#ccc] bg-[#e9e9e9]"><svg width="13" height="11" viewBox="0 0 13 11"><path d="M0 .500h9M0 3.500h12M0 6.500h9M0 9.500h13" stroke="#555"/></svg></span>
        <span class="w-[30px] flex items-center justify-center border-r border-[#ccc]"><svg width="13" height="11" viewBox="0 0 13 11"><path d="M2 .500h9M0 3.500h13M2 6.500h9M0 9.500h13" stroke="#555"/></svg></span>
        <span class="w-[30px] flex items-center justify-center border-r border-[#ccc]"><svg width="13" height="11" viewBox="0 0 13 11"><path d="M4 .500h9M1 3.500h12M4 6.500h9M0 9.500h13" stroke="#555"/></svg></span>
        <span class="flex-1 flex items-center justify-center"><svg width="13" height="11" viewBox="0 0 13 11"><path d="M0 .500h13M0 3.500h13M0 6.500h13M0 9.500h13" stroke="#555"/></svg></span>
      </div>
      <div class="ml-[20px] flex h-[25px] w-[60px] border border-[#c4c4c4] rounded-[3px] bg-linear-to-b from-white to-[#f1f1f1] shadow-[0_1px_1px_#999]">
        <span class="w-[30px] flex items-center justify-center border-r border-[#ccc]"><svg width="13" height="11" viewBox="0 0 13 11"><path d="M0 .500h13M5 3.500h8M5 6.500h8M0 9.500h13" stroke="#555"/><path d="M0 3l3 2.500L0 8z" fill="#1d4e78"/></svg></span>
        <span class="flex-1 flex items-center justify-center"><svg width="13" height="11" viewBox="0 0 13 11"><path d="M0 .500h13M5 3.500h8M5 6.500h8M0 9.500h13" stroke="#555"/><path d="M3 3L0 5.500 3 8z" fill="#1d4e78"/></svg></span>
      </div>
      <button class="ml-auto w-[61px] h-[25px] flex items-center justify-center gap-[6px] border border-[#c4c4c4] rounded-[3px] bg-linear-to-b from-white to-[#f1f1f1] shadow-[0_1px_1px_#999] text-[#555] text-[14px]">Еще<svg width="6" height="4"><use href="#dd"/></svg></button>
    </div>

    <div class="mt-[10px] w-[1008px] h-[104px] border border-[#aaa] bg-white"></div>

    <div class="mt-[10px] h-[26px] flex items-center text-[#555] text-[13px] leading-[16px]">
      <button class="w-[30px] h-[26px] flex items-center justify-center border border-[#c4c4c4] rounded-[3px] bg-linear-to-b from-white to-[#f1f1f1] shadow-[0_1px_1px_#999]"><svg width="16" height="17" viewBox="0 0 16 17"><path d="M1 16l5-5" stroke="#e8684a" stroke-width="1.300"/><path d="M9 1l6 6-2.500 1-2.500 4-5.500-5.500L8 4z" fill="#e8684a"/></svg></button>
      <button class="ml-[10px] w-[99px] h-[26px] flex items-center justify-center gap-[6px] pr-[4px] border border-[#c4c4c4] rounded-[3px] bg-linear-to-b from-white to-[#f1f1f1] shadow-[0_1px_1px_#999] text-[12.8px]"><svg width="14" height="14"><use href="#plus"/></svg>Добавить</button>
      <a class="ml-[13px] mt-[2px] underline">УПО</a>
      <a class="ml-[12px] mt-[2px] underline">НБТ</a>
      <a class="ml-[12px] mt-[2px] underline">Отказ</a>
      <a class="ml-[12px] mt-[2px] underline text-[12.4px]">Отправить КП</a>
      <a class="ml-[13px] mt-[2px] underline">Связаться позже</a>
    </div>
  </div>
</div>
</body>
</html>
